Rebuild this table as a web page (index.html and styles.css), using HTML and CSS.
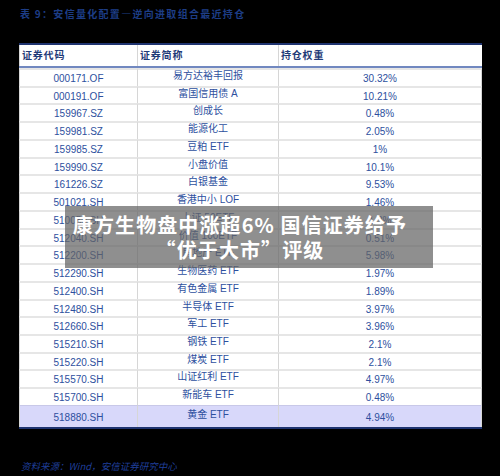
FILE: index.html
```html
<!DOCTYPE html>
<html lang="zh">
<head>
<meta charset="utf-8">
<link rel="stylesheet" href="styles.css">
</head>
<body>
<div class="page">
  <div class="title">表 9：安信量化配置—逆向进取组合最近持仓</div>
  <div class="table">
    <div class="row head">
      <div class="cell">证券代码</div>
      <div class="cell">证券简称</div>
      <div class="cell">持仓权重</div>
    </div>
    <div class="row"><div class="cell c">000171.OF</div><div class="cell n">易方达裕丰回报</div><div class="cell w">30.32%</div></div>
    <div class="row"><div class="cell c">000191.OF</div><div class="cell n">富国信用债 A</div><div class="cell w">10.21%</div></div>
    <div class="row"><div class="cell c">159967.SZ</div><div class="cell n">创成长</div><div class="cell w">0.48%</div></div>
    <div class="row"><div class="cell c">159981.SZ</div><div class="cell n">能源化工</div><div class="cell w">2.05%</div></div>
    <div class="row"><div class="cell c">159985.SZ</div><div class="cell n">豆粕 ETF</div><div class="cell w">1%</div></div>
    <div class="row"><div class="cell c">159990.SZ</div><div class="cell n">小盘价值</div><div class="cell w">10.1%</div></div>
    <div class="row"><div class="cell c">161226.SZ</div><div class="cell n">白银基金</div><div class="cell w">9.53%</div></div>
    <div class="row"><div class="cell c">501021.SH</div><div class="cell n">香港中小 LOF</div><div class="cell w">1.46%</div></div>
    <div class="row"><div class="cell c">510050.SH</div><div class="cell n">上证 50ETF</div><div class="cell w">1.3%</div></div>
    <div class="row"><div class="cell c">512040.SH</div><div class="cell n">价值 100ETF</div><div class="cell w">0.51%</div></div>
    <div class="row"><div class="cell c">512200.SH</div><div class="cell n">房地产 ETF</div><div class="cell w">5.98%</div></div>
    <div class="row"><div class="cell c">512290.SH</div><div class="cell n">生物医药 ETF</div><div class="cell w">1.97%</div></div>
    <div class="row"><div class="cell c">512400.SH</div><div class="cell n">有色金属 ETF</div><div class="cell w">1.89%</div></div>
    <div class="row"><div class="cell c">512480.SH</div><div class="cell n">半导体 ETF</div><div class="cell w">3.97%</div></div>
    <div class="row"><div class="cell c">512660.SH</div><div class="cell n">军工 ETF</div><div class="cell w">3.96%</div></div>
    <div class="row"><div class="cell c">515210.SH</div><div class="cell n">钢铁 ETF</div><div class="cell w">2.1%</div></div>
    <div class="row"><div class="cell c">515220.SH</div><div class="cell n">煤炭 ETF</div><div class="cell w">2.1%</div></div>
    <div class="row"><div class="cell c">515570.SH</div><div class="cell n">山证红利 ETF</div><div class="cell w">4.97%</div></div>
    <div class="row"><div class="cell c">515700.SH</div><div class="cell n">新能车 ETF</div><div class="cell w">0.48%</div></div>
    <div class="row last"><div class="cell c">518880.SH</div><div class="cell n">黄金 ETF</div><div class="cell w">4.94%</div></div>
  </div>
  <div class="source">资料来源：Wind，安信证券研究中心</div>
  <div class="overlay">
    <div class="headline">康方生物盘中涨超6% 国信证券给予<br>“优于大市”评级</div>
  </div>
</div>
</body>
</html>
```
FILE: styles.css
```css
html, body {
  margin: 0;
  padding: 0;
  background: #000;
}
.page {
  position: relative;
  width: 500px;
  height: 476px;
  padding: 8px 18px 0 19px;
  box-sizing: border-box;
  font-family: "Liberation Sans", "Noto Sans CJK SC", sans-serif;
}
.title {
  font-family: "Noto Sans CJK SC", sans-serif;
  font-weight: bold;
  font-size: 10px;
  line-height: 12px;
  letter-spacing: 1.3px;
  color: #1d3d86;
  padding-left: 1px;
}
.table {
  margin-top: 23px;
  width: 463px;
  background: #fff;
  border-top: 2px solid #1f3470;
  border-bottom: 2px solid #1f3470;
}
.row {
  display: grid;
  grid-template-columns: 118px 141px 204px;
  height: 17.74px;
}
.cell {
  box-sizing: border-box;
  border-top: 2px solid #e6e6e6;
  border-left: 1px solid #d6d6d6;
  text-align: center;
  font-size: 10px;
  line-height: 12px;
  padding-top: 3px;
  color: #2d4f9e;
  white-space: nowrap;
  overflow: hidden;
}
.cell.n {
  padding-top: 0;
}
.cell.w {
  border-right: 1px solid #d6d6d6;
}
.row.head {
  height: 21px;
  border-bottom: 2px solid #7188c0;
}
.row.head .cell {
  border-top: none;
  text-align: left;
  font-family: "Noto Sans CJK SC", sans-serif;
  font-weight: bold;
  color: #1f3a78;
  font-size: 10px;
  letter-spacing: 0.8px;
  padding: 4px 0 0 2px;
}
.row.last {
  height: 22px;
  background: #d8d8fa;
}
.row.last .cell {
  padding-top: 6px;
  border-top: 1px solid #c8c8e8;
}
.row.last .cell.n {
  padding-top: 3px;
}
.source {
  margin-top: 31px;
  font-family: "Noto Sans CJK SC", sans-serif;
  font-style: italic;
  font-size: 9.5px;
  line-height: 12px;
  color: #1f3e98;
  padding-left: 2px;
}
.overlay {
  position: absolute;
  left: 65px;
  top: 206px;
  width: 368px;
  height: 62px;
  background: rgba(100, 100, 100, 0.72);
  display: flex;
  align-items: center;
  justify-content: center;
}
.headline {
  font-family: "Noto Sans CJK SC", sans-serif;
  font-weight: bold;
  font-size: 20px;
  line-height: 25px;
  letter-spacing: 1.1px;
  color: #fff;
  text-align: center;
  margin-left: -18px;
}
```
